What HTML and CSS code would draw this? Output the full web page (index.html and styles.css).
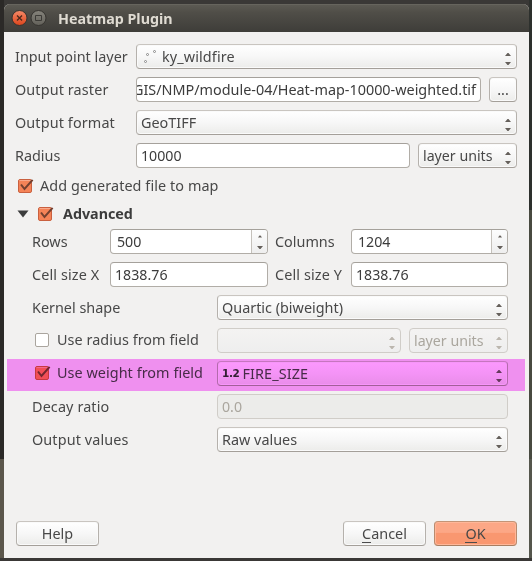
FILE: index.html
```html
<!DOCTYPE html>
<html lang="en">
<head>
<meta charset="utf-8">
<title>Heatmap Plugin</title>
<link rel="stylesheet" href="styles.css">
</head>
<body>
<svg class="defs" aria-hidden="true">
  <symbol id="arrows" viewBox="0 0 6 12"><path d="M0 3h6L3.5 0h-1zM0 9h6L3.5 12h-1z"/></symbol>
  <symbol id="spin-arrows" viewBox="0 0 6 14"><path d="M1 2.5h4L3.5.5h-1zM0 11h6l-2.5 3h-1z"/></symbol>
  <symbol id="check" viewBox="0 0 18 16">
    <rect x="1.5" y="1.5" width="13" height="13" rx="1.5" fill="#f58357" stroke="#c9603f"/>
    <path d="M2.5 2.5h11" stroke="#f9a98b"/>
    <path d="M4 6.5 7.5 11 15.6 1.8" fill="none" stroke="#74402f" stroke-width="2"/>
  </symbol>
</svg>
<main class="dialog">
  <header class="titlebar">
    <svg class="controls" viewBox="0 0 36 18">
      <defs><linearGradient id="cg" x2="0" y2="1"><stop stop-color="#f58a68"/><stop offset="1" stop-color="#dc451c"/></linearGradient>
      <linearGradient id="mg" x2="0" y2="1"><stop stop-color="#85837b"/><stop offset="1" stop-color="#63615a"/></linearGradient></defs>
      <circle cx="8.5" cy="9" r="7.5" fill="url(#cg)" stroke="#35332f"/>
      <path d="m6 6.5 5 5m0-5-5 5" stroke="#4d291c" stroke-width="1.4"/>
      <circle cx="27.5" cy="9" r="7.5" fill="url(#mg)" stroke="#35332f"/>
      <path d="M24.5 6.5h6v5h-6z" fill="none" stroke="#3c3b37"/>
    </svg>
    <h1>Heatmap Plugin</h1>
  </header>
  <section class="body">
    <div class="row">
      <label>Input point layer</label>
      <div class="combo grow"><svg class="points" viewBox="0 0 14 14"><g fill="#fff" stroke="#888"><circle cx="10.5" cy="2.5" r="1"/><circle cx="3.5" cy="5.5" r="1"/><circle cx="1.5" cy="12.5" r="1"/></g></svg><span class="wide">ky_wildfire</span><svg class="arrows"><use href="#arrows"/></svg></div>
    </div>
    <div class="row">
      <label class="wide">Output raster</label>
      <div class="field grow path"><span>GIS/NMP/module-04/Heat-map-10000-weighted.tif</span></div>
      <button class="button browse">...</button>
    </div>
    <div class="row">
      <label class="wide">Output format</label>
      <div class="combo grow"><span>GeoTIFF</span><svg class="arrows"><use href="#arrows"/></svg></div>
    </div>
    <div class="row">
      <label>Radius</label>
      <div class="field grow"><span class="num">10000</span></div>
      <div class="combo units"><span>layer units</span><svg class="arrows"><use href="#arrows"/></svg></div>
    </div>
    <div class="check-row"><svg class="check"><use href="#check"/></svg><span>Add generated file to map</span></div>
    <div class="check-row advanced"><svg class="triangle" viewBox="0 0 12 8"><path d="M.5.5h11L6 7.5z"/></svg><svg class="check"><use href="#check"/></svg><b>Advanced</b></div>
    <div class="group">
      <div class="quad">
        <label>Rows</label>
        <div class="field spin"><span class="num">500</span><i><svg class="arrows"><use href="#spin-arrows"/></svg></i></div>
        <label>Columns</label>
        <div class="field spin"><span class="num">1204</span><i><svg class="arrows"><use href="#spin-arrows"/></svg></i></div>
        <label class="wide">Cell size X</label>
        <div class="field"><span class="num">1838.76</span></div>
        <label class="wide">Cell size Y</label>
        <div class="field"><span class="num">1838.76</span></div>
      </div>
      <div class="row">
        <label>Kernel shape</label>
        <div class="combo grow"><span>Quartic (biweight)</span><svg class="arrows"><use href="#arrows"/></svg></div>
      </div>
      <div class="row">
        <label class="with-box"><i class="box"></i><span>Use radius from field</span></label>
        <div class="combo grow disabled"><svg class="arrows"><use href="#arrows"/></svg></div>
        <div class="combo units disabled"><span>layer units</span><svg class="arrows"><use href="#arrows"/></svg></div>
      </div>
      <div class="row highlight">
        <label class="with-box"><svg class="check"><use href="#check"/></svg><span>Use weight from field</span></label>
        <div class="combo grow"><span class="type">1.2</span><span class="wide">FIRE_SIZE</span><svg class="arrows"><use href="#arrows"/></svg></div>
      </div>
      <div class="row">
        <label class="wide">Decay ratio</label>
        <div class="field grow disabled"><span class="num">0.0</span></div>
      </div>
      <div class="row">
        <label class="wide">Output values</label>
        <div class="combo grow"><span>Raw values</span><svg class="arrows"><use href="#arrows"/></svg></div>
      </div>
    </div>
    <footer class="actions">
      <button class="button help">Help</button>
      <button class="button"><u>C</u>ancel</button>
      <button class="button primary"><u>O</u>K</button>
    </footer>
  </section>
</main>
</body>
</html>
```
FILE: styles.css
```css
* { box-sizing: border-box; }
body {
  margin: 0; height: 561px; padding: 4px 3px 3px 4px; overflow: hidden;
  background: linear-gradient(90deg, #2b2927 4px, transparent 4px, transparent 529px, #2d302d 529px) 0 0 / 100% 210px no-repeat,
    linear-gradient(90deg, #2b2927 4px, transparent 4px, transparent 529px, #484a40 529px) 0 210px / 100% 249px no-repeat,
    linear-gradient(90deg, #5b564b 4px, transparent 4px, transparent 529px, #55564c 529px) 0 459px / 100% 99px no-repeat,
    #3a3836;
  font: 14.4px/25px "Noto Sans", sans-serif; color: #484848;
}
.defs { position: absolute; width: 0; height: 0; }
.dialog { height: 554px; display: flex; flex-direction: column; border-radius: 6px 6px 0 0; overflow: hidden; background: #f2f1f0; }
.titlebar { flex: none; height: 28px; display: flex; align-items: center; padding-left: 7px; background: linear-gradient(#5d5b54, #504e48 30%, #3e3d39); box-shadow: inset 0 1px #66645d; }
.controls { width: 36px; height: 18px; }
h1 { margin: 2px 0 0 11px; font-size: 14.3px; line-height: 24px; color: #dfdbd2; }
.body { flex: 1; display: flex; flex-direction: column; padding: 12px 12px 12px 11px; }
.row { display: flex; gap: 8px; height: 25px; margin-bottom: 8px; }
.row > label { flex: none; width: 113px; }
label, span, b { white-space: nowrap; }
.wide { letter-spacing: .12px; }
.num { font-size: 14.2px; }
.grow { flex: 1; min-width: 0; }
.combo, .field, .button { height: 25px; border: 1px solid #b5b1ab; border-radius: 4px; }
.combo, .button { border-color: #c9c5c0 #b5b1ac #a49f99; background: linear-gradient(#fff, #f7f7f7 50%, #ececea); box-shadow: inset 0 0 0 1px #fafafa; }
.combo { display: flex; align-items: center; padding: 0 5px 0 4px; line-height: 23px; }
.field { display: flex; padding: 0 4px; background: #fff; border-color: #a5a19b #b1ada7 #b1ada7; line-height: 23px; color: #3c3c3c; }
.arrows { flex: none; width: 6px; height: 12px; margin: 4px 0 0 auto; fill: #65605b; }
.points { width: 14px; height: 14px; margin: -2px 4px 0 3px; }
.units { width: 99px; }
.units span { font-size: 14.2px; }
.path { padding: 0 4px 0 0; justify-content: flex-end; overflow: hidden; }
.button { width: 83px; padding: 0; font: inherit; line-height: 23px; color: #484848; text-align: center; }
.browse { width: 28px; }
.check { width: 18px; height: 16px; flex: none; }
.check-row { display: flex; align-items: center; height: 20px; padding-left: 2px; gap: 5px; margin: 0 0 8px; }
.check-row > span { margin-top: -2px; letter-spacing: .08px; }
.advanced { height: 20px; margin: 0 0 5px; color: #3c3c3c; }
.triangle { width: 12px; height: 8px; margin-right: 3px; fill: #3c3c3c; }
.advanced b { margin: -2px 0 0 3px; font-size: 14.3px; }
.group { padding: 0 9px 0 17px; }
.quad { display: grid; grid-template-columns: 78px 158px 7px 76px 157px; row-gap: 8px; margin-bottom: 8px; }
.quad > :nth-child(4n + 3) { grid-column: 4; }
.spin { padding-right: 0; }
.spin .num { margin-left: 2px; }
.spin i { width: 16px; margin-left: auto; border-left: 1px solid #c5c1bb; background: linear-gradient(#fdfdfd, #eee); border-radius: 0 3px 3px 0; display: flex; padding-right: 4px; align-items: center; }
.spin .arrows { height: 14px; margin-top: 1px; }
.group .row > label { width: 177px; }
.with-box { display: flex; align-items: center; gap: 5px; height: 23px; padding-left: 2px; }
.with-box span { margin-top: -1px; letter-spacing: .05px; }
.box { width: 14px; height: 14px; margin: 0 3px 0 1px; border: 1px solid #aaa59e; border-radius: 2px; background: #fff; }
.disabled { color: #aaa69e; border-color: #d0cdc8; background: #ececea; box-shadow: none; }
.combo.disabled { background: linear-gradient(#f4f3f2, #eee); }
.disabled .arrows { fill: #bbb6ae; }
.highlight { position: relative; }
.highlight .with-box { height: 24px; }
.highlight::after { content: ""; position: absolute; inset: -2px -17px -5px -25px; background: #fc98fe; mix-blend-mode: multiply; }
.type { font: bold 10.5px/23px "DejaVu Sans", sans-serif; margin: -1px 3px 0 0; letter-spacing: -.4px; color: #333; }
.actions { display: flex; gap: 8px; margin-top: auto; padding-left: 1px; }
.help { margin-right: auto; }
.primary { background: linear-gradient(#fca786 45%, #f99770 50%); border-color: #c49476 #b98a6d #a87d61; box-shadow: inset 0 0 0 1px #ffb799; }
u { display: inline-block; line-height: 16px; text-decoration: none; border-bottom: 1px solid #4c4c4c; }
```
